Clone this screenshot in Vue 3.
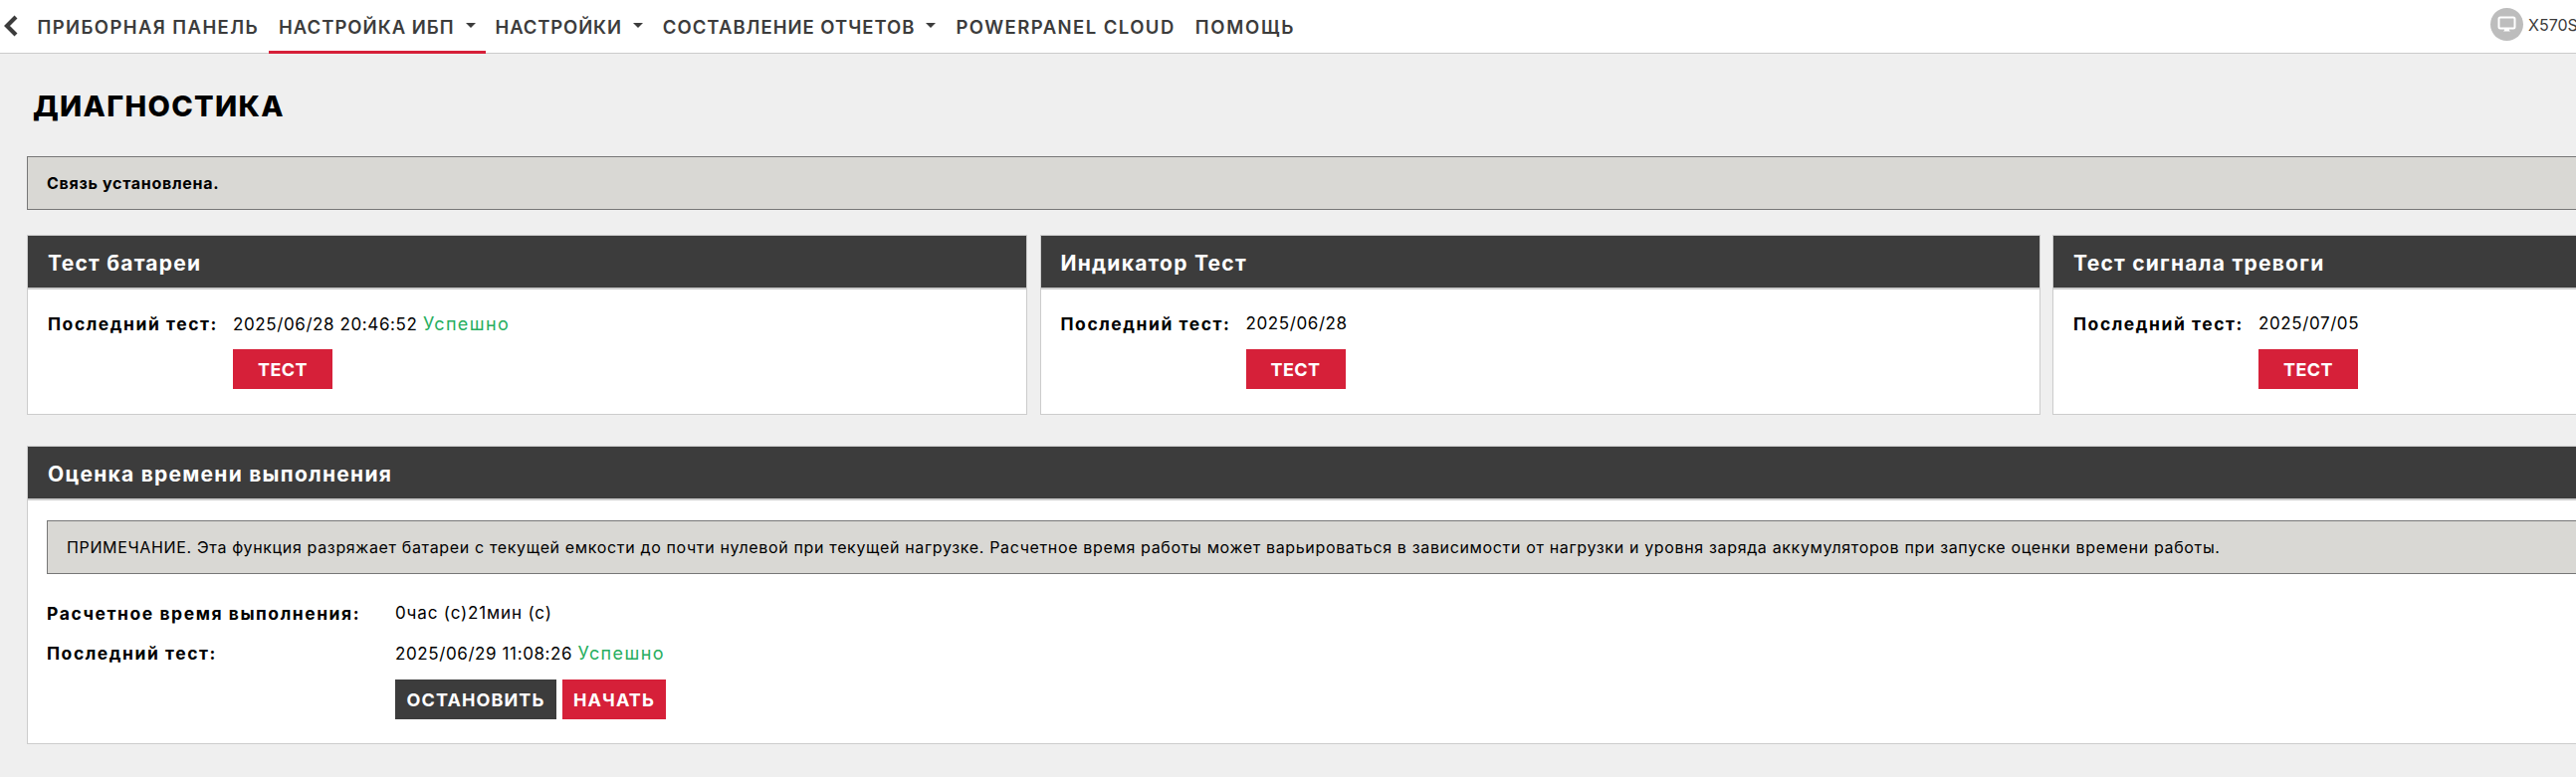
<script setup>
const tests = [
  { title: 'Тест батареи', date: '2025/06/28 20:46:52', ok: true },
  { title: 'Индикатор Тест', date: '2025/06/28', ok: false },
  { title: 'Тест сигнала тревоги', date: '2025/07/05', ok: false },
]
const navItems = [
  { label: 'ПРИБОРНАЯ ПАНЕЛЬ', track: 1.4 },
  { label: 'НАСТРОЙКА ИБП', caret: true, active: true, track: 1.0 },
  { label: 'НАСТРОЙКИ', caret: true, track: 0.85 },
  { label: 'СОСТАВЛЕНИЕ ОТЧЕТОВ', caret: true, track: 1.0 },
  { label: 'POWERPANEL CLOUD', track: 1.45 },
  { label: 'ПОМОЩЬ', track: 1.75 },
]
</script>

<template>
  <div class="page">
    <header class="nav">
      <svg class="back" width="15" height="22" viewBox="0 0 15 22"><path d="M13 2 L4 11 L13 20" fill="none" stroke="#3c3c3c" stroke-width="4.2" /></svg>
      <nav class="menu">
        <a v-for="item in navItems" :key="item.label" class="item" :class="{ active: item.active }" :style="{ letterSpacing: item.track + 'px' }">
          {{ item.label }}<i v-if="item.caret" class="caret"></i>
        </a>
      </nav>
      <div class="device">
        <span class="avatar">
          <svg width="19" height="17" viewBox="0 0 19 17"><rect x="1.5" y="1.5" width="16" height="11" rx="1.5" fill="#bdbdbd" stroke="#fff" stroke-width="2" /><path d="M7 13h5v1.5l1 1h-7l1-1z" fill="#fff" /></svg>
        </span>
        <span class="device-name">X570S</span>
      </div>
    </header>

    <main class="content">
      <h1 class="title">ДИАГНОСТИКА</h1>
      <div class="notice status">Связь установлена.</div>

      <div class="cards">
        <section v-for="t in tests" :key="t.title" class="card">
          <h2 class="head">{{ t.title }}</h2>
          <div class="body test-body">
            <b class="label">Последний тест:</b>
            <span class="value">{{ t.date }} <span v-if="t.ok" class="ok">Успешно</span></span>
            <button class="btn red wide">ТЕСТ</button>
          </div>
        </section>
      </div>

      <section class="card estimate">
        <h2 class="head">Оценка времени выполнения</h2>
        <div class="body est-body">
          <div class="notice note">ПРИМЕЧАНИЕ. Эта функция разряжает батареи с текущей емкости до почти нулевой при текущей нагрузке. Расчетное время работы может варьироваться в зависимости от нагрузки и уровня заряда аккумуляторов при запуске оценки времени работы.</div>
          <div class="grid">
            <b class="label">Расчетное время выполнения:</b>
            <span class="value dur">0час (с)21мин (с)</span>
            <b class="label">Последний тест:</b>
            <span class="value">2025/06/29 11:08:26 <span class="ok">Успешно</span></span>
            <div class="btns">
              <button class="btn dark stop">ОСТАНОВИТЬ</button>
              <button class="btn red start">НАЧАТЬ</button>
            </div>
          </div>
        </div>
      </section>
    </main>
  </div>
</template>

<style>
html, body { margin: 0; background: #efefef; overflow: hidden; }
</style>

<style scoped>
.page { width: 3095px; min-height: 781px; background: #efefef; font-family: Inter, "Noto Sans", sans-serif; font-size: 16px; color: #000; }
.nav { height: 54px; box-sizing: border-box; background: #fff; border-bottom: 1px solid #ccc; display: flex; align-items: stretch; width: 2588px; }
.back { margin: 15px 0 0 3px; flex: none; }
.menu { display: flex; margin-left: 9.5px; }
.item { height: 54px; box-sizing: border-box; padding: 3px 10px 0; display: flex; align-items: center; gap: 11px; font-size: 18.5px; font-weight: 600; color: #3c3c3c; white-space: nowrap; border-bottom: 3px solid transparent; }
.item.active { border-bottom-color: #d62039; }
.caret { width: 0; height: 0; border-left: 5px solid transparent; border-right: 5px solid transparent; border-top: 5px solid #3c3c3c; margin-top: -3px; }
.device { margin-left: auto; display: flex; align-items: center; gap: 5px; height: 49px; width: 86px; flex: none; }
.avatar { width: 33px; height: 33px; border-radius: 50%; background: #bdbdbd; display: flex; align-items: center; justify-content: center; flex: none; }
.device-name { font-size: 16px; color: #3c3c3c; white-space: nowrap; }
.content { padding: 0 27px; }
.title { margin: 0; padding: 36px 0 0 6px; height: 103px; box-sizing: border-box; font-size: 29px; letter-spacing: 1.3px; line-height: 34px; font-weight: 800; }
.notice { background: #d9d8d4; border: 1px solid #777; box-sizing: border-box; display: flex; align-items: center; }
.status { height: 54px; padding-left: 19px; font-size: 16px; letter-spacing: 0.7px; font-weight: 700; margin-bottom: 25px; }
.cards { display: grid; grid-template-columns: repeat(3, 1005px); gap: 12.5px; }
.card { background: #fff; border: 1px solid #ccc; box-sizing: border-box; }
.cards .card { height: 181px; }
.head { margin: 0; height: 54px; box-sizing: border-box; background: #3c3c3c; border-bottom: 2px solid #ccc; color: #fff; font-size: 21px; letter-spacing: 1.25px; font-weight: 700; padding: 2px 0 0 20px; display: flex; align-items: center; }
.label { font-size: 17.5px; letter-spacing: 1.55px; font-weight: 700; white-space: nowrap; }
.value { font-size: 17px; letter-spacing: 0.6px; white-space: nowrap; }
.dur { letter-spacing: 0.85px; }
.test-body { padding: 22px 20px 0; display: grid; grid-template-columns: 186px 1fr; grid-template-rows: 24px 40px; row-gap: 14px; align-items: center; }
.test-body .btn { grid-column: 2; }
.btn { border: 0; height: 40px; padding: 0; color: #fff; font: 700 18px Inter, "Noto Sans", sans-serif; letter-spacing: 1.1px; }
.wide { width: 100px; letter-spacing: 0.4px; justify-self: start; }
.stop { width: 162px; }
.start { width: 104px; }
.red { background: #d62039; }
.dark { background: #3c3c3c; }
.ok { color: #27ae60; font-size: 18px; letter-spacing: 1.4px; }
.estimate { margin-top: 31px; height: 300px; }
.est-body { padding: 20px 19px 0; }
.note { height: 54px; padding-left: 19px; font-size: 16px; letter-spacing: 0.65px; white-space: nowrap; }
.grid { display: grid; grid-template-columns: 350px 1fr; grid-template-rows: 24px 24px 40px; row-gap: 16px; margin-top: 27px; align-items: center; }
.btns { grid-column: 2; display: flex; gap: 6px; height: 40px; margin-top: -2px; }
</style>
